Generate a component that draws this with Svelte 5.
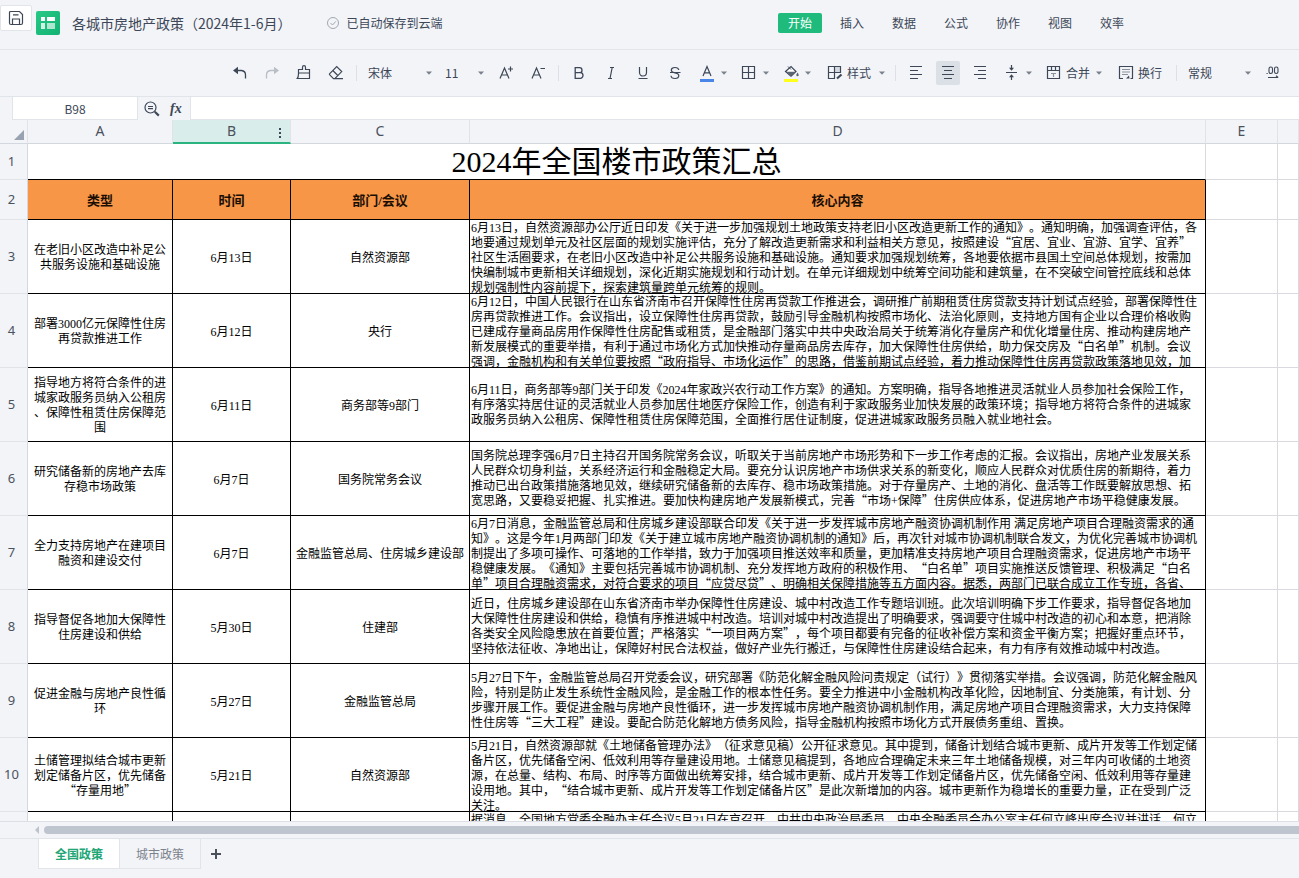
<script>
  const menus = ['开始', '插入', '数据', '公式', '协作', '视图', '效率'];
  const columns = ['A', 'B', 'C', 'D', 'E', ''];
  const heads = ['类型', '时间', '部门/会议', '核心内容'];

  const rows = [
    {
      n: 3,
      kind: '在老旧小区改造中补足公\n共服务设施和基础设施',
      date: '6月13日',
      dept: '自然资源部',
      text: '6月13日，自然资源部办公厅近日印发《关于进一步加强规划土地政策支持老旧小区改造更新工作的通知》。通知明确，加强调查评估，各\n地要通过规划单元及社区层面的规划实施评估，充分了解改造更新需求和利益相关方意见，按照建设“宜居、宜业、宜游、宜学、宜养”\n社区生活圈要求，在老旧小区改造中补足公共服务设施和基础设施。通知要求加强规划统筹，各地要依据市县国土空间总体规划，按需加\n快编制城市更新相关详细规划，深化近期实施规划和行动计划。在单元详细规划中统筹空间功能和建筑量，在不突破空间管控底线和总体\n规划强制性内容前提下，探索建筑量跨单元统筹的规则。'
    },
    {
      n: 4,
      kind: '部署3000亿元保障性住房\n再贷款推进工作',
      date: '6月12日',
      dept: '央行',
      text: '6月12日，中国人民银行在山东省济南市召开保障性住房再贷款工作推进会，调研推广前期租赁住房贷款支持计划试点经验，部署保障性住\n房再贷款推进工作。会议指出，设立保障性住房再贷款，鼓励引导金融机构按照市场化、法治化原则，支持地方国有企业以合理价格收购\n已建成存量商品房用作保障性住房配售或租赁，是金融部门落实中共中央政治局关于统筹消化存量房产和优化增量住房、推动构建房地产\n新发展模式的重要举措，有利于通过市场化方式加快推动存量商品房去库存，加大保障性住房供给，助力保交房及“白名单”机制。会议\n强调，金融机构和有关单位要按照“政府指导、市场化运作”的思路，借鉴前期试点经验，着力推动保障性住房再贷款政策落地见效，加'
    },
    {
      n: 5,
      kind: '指导地方将符合条件的进\n城家政服务员纳入公租房\n、保障性租赁住房保障范\n围',
      date: '6月11日',
      dept: '商务部等9部门',
      text: '6月11日，商务部等9部门关于印发《2024年家政兴农行动工作方案》的通知。方案明确，指导各地推进灵活就业人员参加社会保险工作，\n有序落实持居住证的灵活就业人员参加居住地医疗保险工作，创造有利于家政服务业加快发展的政策环境；指导地方将符合条件的进城家\n政服务员纳入公租房、保障性租赁住房保障范围，全面推行居住证制度，促进进城家政服务员融入就业地社会。'
    },
    {
      n: 6,
      kind: '研究储备新的房地产去库\n存稳市场政策',
      date: '6月7日',
      dept: '国务院常务会议',
      text: '国务院总理李强6月7日主持召开国务院常务会议，听取关于当前房地产市场形势和下一步工作考虑的汇报。会议指出，房地产业发展关系\n人民群众切身利益，关系经济运行和金融稳定大局。要充分认识房地产市场供求关系的新变化，顺应人民群众对优质住房的新期待，着力\n推动已出台政策措施落地见效，继续研究储备新的去库存、稳市场政策措施。对于存量房产、土地的消化、盘活等工作既要解放思想、拓\n宽思路，又要稳妥把握、扎实推进。要加快构建房地产发展新模式，完善“市场+保障”住房供应体系，促进房地产市场平稳健康发展。'
    },
    {
      n: 7,
      kind: '全力支持房地产在建项目\n融资和建设交付',
      date: '6月7日',
      dept: '金融监管总局、住房城乡建设部',
      text: '6月7日消息，金融监管总局和住房城乡建设部联合印发《关于进一步发挥城市房地产融资协调机制作用 满足房地产项目合理融资需求的通\n知》。这是今年1月两部门印发《关于建立城市房地产融资协调机制的通知》后，再次针对城市协调机制联合发文，为优化完善城市协调机\n制提出了多项可操作、可落地的工作举措，致力于加强项目推送效率和质量，更加精准支持房地产项目合理融资需求，促进房地产市场平\n稳健康发展。《通知》主要包括完善城市协调机制、充分发挥地方政府的积极作用、“白名单”项目实施推送反馈管理、积极满足“白名\n单”项目合理融资需求，对符合要求的项目“应贷尽贷”、明确相关保障措施等五方面内容。据悉，两部门已联合成立工作专班，各省、'
    },
    {
      n: 8,
      kind: '指导督促各地加大保障性\n住房建设和供给',
      date: '5月30日',
      dept: '住建部',
      text: '近日，住房城乡建设部在山东省济南市举办保障性住房建设、城中村改造工作专题培训班。此次培训明确下步工作要求，指导督促各地加\n大保障性住房建设和供给，稳慎有序推进城中村改造。培训对城中村改造提出了明确要求，强调要守住城中村改造的初心和本意，把消除\n各类安全风险隐患放在首要位置；严格落实“一项目两方案”，每个项目都要有完备的征收补偿方案和资金平衡方案；把握好重点环节，\n坚持依法征收、净地出让，保障好村民合法权益，做好产业先行搬迁，与保障性住房建设结合起来，有力有序有效推动城中村改造。'
    },
    {
      n: 9,
      kind: '促进金融与房地产良性循\n环',
      date: '5月27日',
      dept: '金融监管总局',
      text: '5月27日下午，金融监管总局召开党委会议，研究部署《防范化解金融风险问责规定（试行）》贯彻落实举措。会议强调，防范化解金融风\n险，特别是防止发生系统性金融风险，是金融工作的根本性任务。要全力推进中小金融机构改革化险，因地制宜、分类施策，有计划、分\n步骤开展工作。要促进金融与房地产良性循环，进一步发挥城市房地产融资协调机制作用，满足房地产项目合理融资需求，大力支持保障\n性住房等“三大工程”建设。要配合防范化解地方债务风险，指导金融机构按照市场化方式开展债务重组、置换。'
    },
    {
      n: 10,
      kind: '土储管理拟结合城市更新\n划定储备片区，优先储备\n“存量用地”',
      date: '5月21日',
      dept: '自然资源部',
      text: '5月21日，自然资源部就《土地储备管理办法》（征求意见稿）公开征求意见。其中提到，储备计划结合城市更新、成片开发等工作划定储\n备片区，优先储备空闲、低效利用等存量建设用地。土储意见稿提到，各地应合理确定未来三年土地储备规模，对三年内可收储的土地资\n源，在总量、结构、布局、时序等方面做出统筹安排，结合城市更新、成片开发等工作划定储备片区，优先储备空闲、低效利用等存量建\n设用地。其中，“结合城市更新、成片开发等工作划定储备片区”是此次新增加的内容。城市更新作为稳增长的重要力量，正在受到广泛\n关注。'
    },
    {
      n: '',
      kind: '',
      date: '',
      dept: '',
      text: '据消息，全国地方党委金融办主任会议5月21日在京召开。中共中央政治局委员、中央金融委员会办公室主任何立峰出席会议并讲话。何立'
    }
  ];

  // Curly quotes take a full-width glyph, everything else the cell's own font.
  const parts = (s) => s.split(/([“”])/).filter(Boolean);
</script>

{#snippet caret()}
  <svg class="caret" width="10" height="10" viewBox="0 0 10 10" aria-hidden="true"><path d="M2 3.5h6L5 6.8z" fill="#7a818c" /></svg>
{/snippet}

{#snippet cellText(s)}
  <span class="txt">{#each parts(s) as p}{#if p === '“' || p === '”'}<span class="q">{p}</span>{:else}{p}{/if}{/each}</span>
{/snippet}

<div class="app">
  <header class="top">
    <button class="save" aria-label="保存">
      <svg width="16" height="16" viewBox="0 0 16 16" fill="none" stroke="#3d4757" stroke-width="1.2"><path d="M2.5 1.5h9l3 3v8.5a1.5 1.5 0 0 1-1.5 1.5H3A1.5 1.5 0 0 1 1.500 13V2.500a1 1 0 0 1 1-1z" /><path d="M4.500 14.500V9h7v5.500M5 4.800h5.500" /></svg>
    </button>
    <svg class="logo" width="24" height="24" viewBox="0 0 24 24" aria-hidden="true">
      <defs><linearGradient id="lg" x1="0" y1="0" x2="1" y2="1"><stop offset="0" stop-color="#27c986" /><stop offset="1" stop-color="#12b172" /></linearGradient></defs>
      <rect width="24" height="24" rx="2" fill="url(#lg)" />
      <g fill="#fff"><rect x="5" y="6" width="4" height="4" /><rect x="11" y="6" width="8" height="4" /><rect x="5" y="12" width="4" height="6" opacity=".8" /><rect x="11" y="12" width="8" height="6" opacity=".65" /></g>
    </svg>
    <h1>各城市房地产政策（2024年1-6月）</h1>
    <div class="status">
      <svg width="14" height="14" viewBox="0 0 14 14" fill="none" stroke="#a2a8b1"><circle cx="7" cy="7" r="5.500" /><path d="M4.500 7l2 2 3.300-3.600" /></svg>
      <span>已自动保存到云端</span>
    </div>
    <nav>
      {#each menus as m, i}<button class:on={i === 0}>{m}</button>{/each}
    </nav>
  </header>

  <div class="tools">
    <button aria-label="撤销"><svg width="16" height="16" viewBox="0 0 16 16"><path d="M1 5.500L6 1.800v7.400z" fill="#3d4757" /><path d="M5 5.500h4.500a4.500 4.500 0 0 1 4 4.500v3.500" fill="none" stroke="#3d4757" stroke-width="1.300" /></svg></button>
    <button aria-label="重做"><svg width="16" height="16" viewBox="0 0 16 16"><path d="M15 5.500L10 1.800v7.400z" fill="#b9bec6" /><path d="M11 5.500H6.500a4.500 4.500 0 0 0-4 4.500v3.500" fill="none" stroke="#b9bec6" stroke-width="1.300" /></svg></button>
    <button aria-label="格式刷"><svg width="16" height="16" viewBox="0 0 16 16" fill="none" stroke="#3d4757" stroke-width="1.200"><path d="M2.500 8.500v-4h4V2.200a1.500 1.500 0 0 1 3 0v2.300h4v9H1.300c.9-1 1.200-2.500 1.200-5zM2.500 8h11" /></svg></button>
    <button aria-label="清除格式"><svg width="16" height="16" viewBox="0 0 16 16" fill="none" stroke="#3d4757" stroke-width="1.200"><path d="M1.500 8.800L8.700 1.600l5 5-6.900 7H5.500l-4-4zM4.800 5.500l5 5M5.500 13.600H15" /></svg></button>
    <i class="sep"></i>
    <div class="pick font"><select aria-label="字体"><option>宋体</option></select>{@render caret()}</div>
    <div class="pick size"><select aria-label="字号"><option>11</option></select>{@render caret()}</div>
    <button aria-label="增大字号"><svg width="16" height="16" viewBox="0 0 16 16" fill="none" stroke="#3d4757" stroke-width="1.200"><path d="M2 13.500L6.500 3 11 13.500M3.700 10h5.600M12.500 1.500v5M10 4h5" /></svg></button>
    <button aria-label="减小字号"><svg width="16" height="16" viewBox="0 0 16 16" fill="none" stroke="#3d4757" stroke-width="1.200"><path d="M2 13.500L6.500 3 11 13.500M3.700 10h5.600M10.500 3.500H15" /></svg></button>
    <i class="sep"></i>
    <button aria-label="加粗"><svg width="16" height="16" viewBox="0 0 16 16" fill="none" stroke="#3d4757" stroke-width="1.300"><path d="M4.200 2.700h4.300a2.500 2.500 0 0 1 0 5H4.200zM4.200 7.700h5a2.800 2.800 0 0 1 0 5.600h-5z" /></svg></button>
    <button aria-label="倾斜"><svg width="16" height="16" viewBox="0 0 16 16" fill="none" stroke="#3d4757" stroke-width="1.200"><path d="M7 2.500h4M5 13.500h4M9.200 2.500L7 13.500" /></svg></button>
    <button aria-label="下划线"><svg width="16" height="16" viewBox="0 0 16 16" fill="none" stroke="#3d4757" stroke-width="1.200"><path d="M4.500 2v5.500a3.500 3.500 0 0 0 7 0V2M3.500 13.500h9" /></svg></button>
    <button aria-label="删除线"><svg width="16" height="16" viewBox="0 0 16 16" fill="none" stroke="#3d4757" stroke-width="1.200"><path d="M11.800 5C11.500 3.300 10 2.500 8 2.500S4.300 3.500 4.300 5.200c0 3.800 7.500 1.500 7.500 5.300 0 2-1.600 3-3.800 3s-3.800-1-4-2.800M3 7.500h10.500" /></svg></button>
    <button class="wide" aria-label="字体颜色"><svg width="24" height="24" viewBox="0 0 24 24"><path d="M8 15l4-9.500L16 15M9.500 11.800h5" fill="none" stroke="#3d4757" stroke-width="1.200" /><path d="M5 18h14v3H5z" fill="#4a86e8" /></svg>{@render caret()}</button>
    <button class="wide" aria-label="边框"><svg width="24" height="24" viewBox="0 0 24 24" fill="none" stroke="#3d4757" stroke-width="1.200"><path d="M5.500 5.500h12v12h-12zM11.500 5.500v12M5.500 11.500h12" /></svg>{@render caret()}</button>
    <button class="wide" aria-label="填充颜色"><svg width="24" height="24" viewBox="0 0 24 24"><path d="M6.500 10.500L12 5.500l5 5-5 4.800z" fill="#fff" stroke="#3d4757" stroke-width="1.200" /><path d="M7 10.800h9.500L12 15zM18.500 11.500c1 1.500 1.200 2 1.200 2.500a1.200 1.200 0 0 1-2.400 0c0-.5.300-1 1.200-2.500z" fill="#5c6574" /><path d="M9 5.500l3 3" stroke="#3d4757" /><path d="M5 18h14v3H5z" fill="#ffff1e" /></svg>{@render caret()}</button>
    <button class="label"><svg width="24" height="24" viewBox="0 0 24 24" fill="none" stroke="#3d4757" stroke-width="1.200"><path d="M12 6h5v5h-5z" fill="#d5d9e0" stroke="none" /><path d="M12 17.500H5.500v-12h12v6H5.500M11.500 5.500v12" /><path d="M14 17.500l4.500-4" stroke-width="2.200" /></svg><span>样式</span><b class="gap"></b>{@render caret()}</button>
    <i class="sep"></i>
    <button aria-label="左对齐"><svg width="16" height="16" viewBox="0 0 16 16"><path d="M2 1.500h12M2 5.500h8M2 9.500h12M2 13.500h8" stroke="#3d4757" stroke-width="1.200" /></svg></button>
    <button class="active" aria-label="居中对齐"><svg width="16" height="16" viewBox="0 0 16 16"><path d="M2 1.500h12M4 5.500h8M2 9.500h12M4 13.500h8" stroke="#3d4757" stroke-width="1.200" /></svg></button>
    <button aria-label="右对齐"><svg width="16" height="16" viewBox="0 0 16 16"><path d="M2 1.500h12M6 5.500h8M2 9.500h12M6 13.500h8" stroke="#3d4757" stroke-width="1.200" /></svg></button>
    <button class="wide" aria-label="垂直对齐"><svg width="24" height="24" viewBox="0 0 24 24"><path d="M6 11.500h11M11.500 4v5M11.500 14v5" stroke="#3d4757" stroke-width="1.200" /><path d="M9 6.800h5L11.500 9.800zM9 16.200h5l-2.500-3z" fill="#3d4757" /></svg>{@render caret()}</button>
    <button class="merge"><svg width="24" height="24" viewBox="0 0 24 24" fill="none" stroke="#3d4757" stroke-width="1.200"><path d="M5.500 5.500h12v12h-12zM5.500 9.500h12M9.500 5.500v4M13.500 5.500v4" /><path d="M9 12.500h5M11.500 12.500v3.500" stroke="#8a919c" /></svg><span>合并</span><b class="gap"></b>{@render caret()}</button>
    <button class="label wrap"><svg width="24" height="24" viewBox="0 0 24 24" fill="none" stroke="#3d4757" stroke-width="1.200"><path d="M9 17.500H5.500v-12h13v12h-2" /><path d="M8 8.500h8M8 11h8M8 13.500h6" stroke="#8a919c" /><path d="M15 14.500l-3 3h3.500z" fill="#3d4757" stroke="none" /></svg><span>换行</span></button>
    <i class="sep"></i>
    <div class="pick num"><select aria-label="数字格式"><option>常规</option></select>{@render caret()}</div>
    <button aria-label="减少小数位"><svg width="16" height="16" viewBox="0 0 16 16" fill="none" stroke="#3d4757" stroke-width="1.100"><rect x="4" y="2" width="3.500" height="6.500" rx="1.700" /><rect x="9.500" y="2" width="3.500" height="6.500" rx="1.700" /><path d="M1.500 8.500h1.200M3 12.500h10M11 10.800l2.200 1.700" /></svg></button>
  </div>

  <div class="formula">
    <input class="name" aria-label="名称框" value="B98" />
    <svg class="mag" width="16" height="16" viewBox="0 0 16 16" fill="none" stroke="#3d4757" stroke-width="1.200"><circle cx="6.500" cy="6.500" r="5.500" /><path d="M4 5.500h5M4 7.700h5" /><path d="M10.800 10.800l4 3.800" stroke-width="2.200" /></svg>
    <span class="fx">fx</span>
    <input class="expr" aria-label="编辑栏" value="" />
  </div>

  <main>
    <table>
      <colgroup><col class="c0" /><col class="ca" /><col class="cb" /><col class="cc" /><col class="cd" /><col class="ce" /><col /></colgroup>
      <thead>
        <tr>
          <th class="corner"><svg width="10" height="10" viewBox="0 0 10 10"><path d="M10 0v10H0z" fill="#98a2b0" /></svg></th>
          {#each columns as c}
            <th class:sel={c === 'B'}>{c}{#if c === 'B'}<svg class="dots" width="4" height="12" viewBox="0 0 4 12"><path d="M1 1h2v2H1zM1 5h2v2H1zM1 9h2v2H1z" fill="#3d4757" /></svg>{/if}</th>
          {/each}
        </tr>
      </thead>
      <tbody>
        <tr class="r1"><th>1</th><td colspan="4" class="title">2024年全国楼市政策汇总</td><td></td><td></td></tr>
        <tr class="r2"><th>2</th>{#each heads as h}<td class="head">{h}</td>{/each}<td></td><td></td></tr>
        {#each rows as r}
          <tr class="body">
            <th>{r.n}</th>
            <td class="k"><div class="cell">{@render cellText(r.kind)}</div></td>
            <td class="k"><div class="cell">{@render cellText(r.date)}</div></td>
            <td class="k"><div class="cell">{@render cellText(r.dept)}</div></td>
            <td class="k"><div class="cell left" class:start={r.n === ''}>{@render cellText(r.text)}</div></td>
            <td></td><td></td>
          </tr>
        {/each}
      </tbody>
    </table>
  </main>

  <div class="scroll">
    <svg width="6" height="8" viewBox="0 0 6 8"><path d="M5 0v8L1 4z" fill="#bcc3cd" /></svg>
    <div class="thumb"></div>
  </div>
  <footer>
    <button class="tab cur">全国政策</button>
    <button class="tab">城市政策</button>
    <button class="add" aria-label="新建工作表"><svg width="12" height="12" viewBox="0 0 12 12"><path d="M6 1v10M1 6h10" stroke="#4b515b" stroke-width="2" /></svg></button>
  </footer>
</div>

<style>
  :global(body) { margin: 0; }
  .app {
    height: 100vh;
    display: flex;
    flex-direction: column;
    overflow: hidden;
    background: #f2f4f8;
    color: #3d4757;
    font: 12px/16px "Noto Sans CJK SC", sans-serif;
  }
  .app * { box-sizing: border-box; }
  button, select, input { font: inherit; color: inherit; border: 0; padding: 0; margin: 0; background: none; }
  svg { display: block; flex: none; }

  .top { height: 50px; flex: none; display: flex; align-items: flex-start; border-bottom: 1px solid #e1e4e9; }
  .save { width: 32px; height: 26px; margin-top: 5px; background: #fff; border: 1px solid #e1e4e9; border-radius: 2px; display: grid; place-items: center; }
  .logo { margin: 11px 12px 0 4px; }
  h1 { margin: 13px 0 0; font-size: 14px; line-height: 20px; font-weight: 400; white-space: nowrap; text-spacing-trim: space-all; }
  .status { display: flex; align-items: center; gap: 6px; margin: 15px 0 0 35px; white-space: nowrap; }
  nav { display: flex; gap: 8px; margin: 13px 165px 0 auto; }
  nav button { width: 44px; height: 20px; border-radius: 2px; white-space: nowrap; }
  nav .on { background: #1fbb7d; color: #fff; }

  .tools { height: 47px; flex: none; display: flex; align-items: center; gap: 8px; padding-left: 228px; border-bottom: 1px solid #e1e4e9; }
  .tools button { height: 24px; min-width: 24px; flex: none; display: flex; align-items: center; justify-content: center; border-radius: 2px; white-space: nowrap; }
  .tools .active { background: #dbe0e7; }
  .sep { width: 1px; height: 16px; background: #dde0e6; flex: none; }
  .tools .label { padding-left: 2px; }
  .tools .wrap { padding-right: 6px; }
  .gap { width: 6px; }
  .merge .gap { width: 4px; }
  .pick { display: flex; align-items: center; flex: none; position: relative; }
  .pick select { appearance: none; width: 100%; height: 24px; padding-left: 3px; outline: 0; }
  .pick .caret { position: absolute; right: 0; pointer-events: none; }
  .font { width: 69px; }
  .size { width: 44px; }
  .num { width: 68px; }

  .formula { height: 23px; flex: none; display: flex; align-items: center; padding-left: 12px; }
  .name { width: 126px; height: 23px; text-align: center; background: #fff; border: solid #e1e4e9; border-width: 0 1px 1px; }
  .mag { margin: 0 10px 0 6px; }
  .fx { width: 20px; font: italic bold 14px/20px "Liberation Serif", serif; }
  .expr { flex: 1; min-width: 0; height: 23px; background: #fff; border: solid #e1e4e9; border-width: 0 0 1px 1px; }

  main { flex: 1; min-height: 0; overflow: hidden; background: #fff; border-bottom: 1px solid #dcdfe5; }
  table { width: 100%; table-layout: fixed; border-collapse: separate; border-spacing: 0; }
  .c0 { width: 28px; }
  .ca { width: 145px; }
  .cb { width: 118px; }
  .cc { width: 179px; }
  .cd { width: 736px; }
  .ce { width: 72px; }
  th, td { padding: 0; border: solid #d8dadf; border-width: 0 1px 1px 0; }
  th { background: #f2f4f8; font: 13px/16px "Noto Sans", sans-serif; color: #4a525e; border-color: #d3d7de; }
  thead th { height: 24px; padding-bottom: 1px; position: relative; font-size: 14px; border-right-color: #e0e3e8; }
  thead .sel { background: #d9edea; border-bottom: 2px solid #29b480; }
  .dots { position: absolute; right: 8px; top: 7px; }
  .corner svg { margin: 8px 0 0 14px; }
  tbody th { padding: 0 4px 2px 0; border-bottom-color: #e0e3e8; }
  .r1 > * { height: 36px; }
  .r2 > * { height: 40px; }
  .body > * { height: 74px; }
  td { color: #000; font-family: "Liberation Serif", "Noto Sans CJK SC", serif; text-spacing-trim: space-all; }
  .title { text-align: center; font-size: 30px; line-height: 35px; border-bottom-color: #000; font-weight: 400; }
  .head { background: #f79646; color: #1a0e04; text-align: center; font-size: 13px; font-weight: 700; border-color: #000; padding-top: 2px; }
  .k { border-color: #000; }
  .cell { height: 73px; padding-top: 3px; overflow: hidden; display: flex; align-items: safe center; justify-content: center; text-align: center; line-height: 15px; }
  .left { justify-content: flex-start; text-align: left; padding: 1px 0 0 1px; }
  .start { align-items: flex-start; }
  .txt { white-space: pre; }
  .q { font-family: "Noto Sans CJK SC", sans-serif; line-height: 1px; }

  .scroll { height: 17px; flex: none; display: flex; align-items: center; gap: 4px; padding-left: 34px; border-bottom: 1px solid #e1e4e9; }
  .thumb { flex: 1; height: 8px; border-radius: 4px 0 0 4px; background: #bfc5cf; }
  footer { height: 39px; flex: none; display: flex; align-items: flex-start; padding-left: 38px; }
  .tab { width: 81px; height: 30px; color: #7c828b; border: solid #e1e4e9; border-width: 0 1px 1px 0; }
  .cur { width: 82px; background: #fff; color: #21a675; font-weight: 700; border-left-width: 1px; }
  .add { width: 30px; height: 30px; display: grid; place-items: center; }
</style>
